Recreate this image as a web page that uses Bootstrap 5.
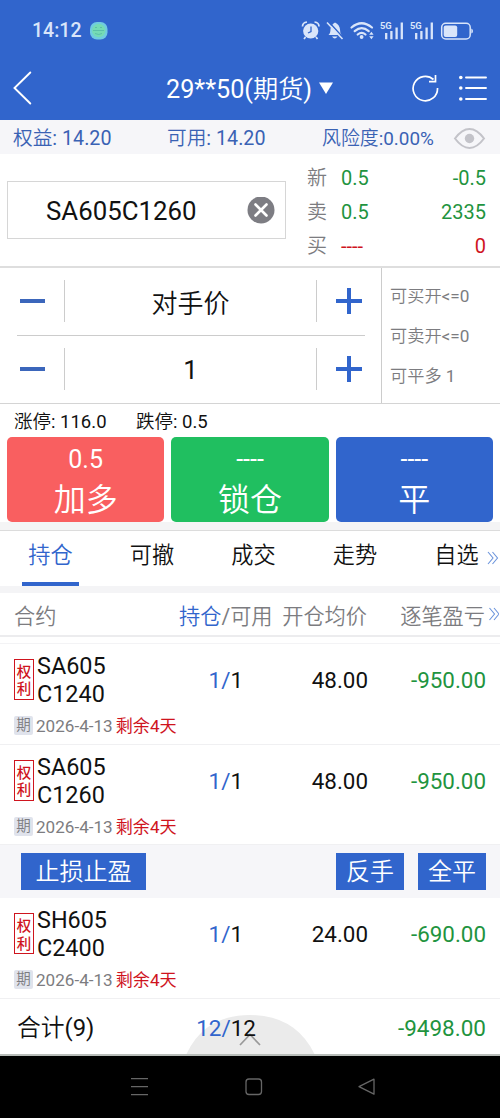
<!DOCTYPE html>
<html lang="zh-CN">
<head>
<meta charset="utf-8">
<meta name="viewport" content="width=device-width, initial-scale=1">
<title>期货交易</title>
<link href="https://cdn.jsdelivr.net/npm/bootstrap@5.3.0/dist/css/bootstrap.min.css" rel="stylesheet">
<style>
:root{--blue:#3165cc;--tint:#f6f6f9;--up:#cf141e;--down:#1f9440;--ink:#111;--dim:#7c7c80}
body{font-family:Roboto,"Noto Sans CJK SC DemiLight","Noto Sans CJK SC",sans-serif;color:var(--ink);background:#fff;font-size:20px;line-height:28px}
.phone{width:500px;height:1118px;overflow:hidden;white-space:nowrap}
svg{display:block;flex:none}
.c-blue{color:var(--blue)}.c-up{color:var(--up)}.c-down{color:var(--down)}.c-dim{color:var(--dim)}
.bg-brand{background:var(--blue)}
.status{height:60px;padding:1px 0 0 32px;color:#d9e5fa}
.clock{font-size:19.5px;font-weight:500;width:57px}
.titlebar{height:60px;padding:0 13px 2px 12px;color:#fff}
.account{font-size:25.2px}
.equity{height:34px;background:var(--tint);color:#3a62b4;padding:4px 14px 0 13px;font-size:19.7px}
.quote{height:114px;border-bottom:2px solid #dedede;padding-left:7px}
.code-box{width:279px;height:58px;border:1px solid #d6d6d6;padding:2px 10px 0 38px;font-size:25.8px}
.levels{padding:7px 14px 0 21px}
.levels>div{height:34px;line-height:34px}
.levels .lbl{width:34px}
.ticket{height:136px;border-bottom:1px solid #d4d4d4}
.steppers{width:382px;border-right:1px solid #ccc;padding:0 16px 0 17px}
.stepper{height:67px}
.stepper+.stepper{border-top:1px solid #ccc;height:68px}
.stepper .val{height:42px;line-height:45px;font-size:26px;border:solid #ccc;border-width:0 1px;width:253px;text-align:center}
.stepper .edge{width:47px}
.avail{font-size:17.2px;padding:8px 0 0 8px}
.avail>div{height:40.3px;line-height:41px}
.limits{height:33px;padding:4px 0 0 14px;font-size:18.5px}
.deals{height:93px;padding:0 7px 8px;background:linear-gradient(#fff 85px,#f4f4f5 85px)}
.deal{width:157.3px;height:85px;border-radius:5px;color:#fff;text-align:center;padding-top:5px}
.deal .px{font-size:25px;height:36px;line-height:36px}
.deal .act{font-size:32px;height:42px;line-height:44px}
.tabs{height:56px;border-top:1px solid #dcdcdc;padding-left:22px;font-size:22.2px}
.tabs>div{width:101.5px;flex:none}
.tabs span.t{display:block;width:57px;height:55px;text-align:center;line-height:48px;flex:none}
.tabs .on{color:var(--blue);border-bottom:4px solid var(--blue)}
.band{height:7px;background:#f4f4f6}
.cols{display:grid;grid-template-columns:142px 86px 126px 118px;padding:0 14px}
.cols>:not(:first-child){text-align:right}
.thead-row{height:44px;border-bottom:2px solid #ececee;line-height:47px;font-size:21.2px;color:var(--dim);grid-template-columns:165px 93px 95px 118px}
.spacer{height:7px;border-bottom:1px solid #f3f3f5}
.pos{height:101px;border-bottom:1px solid #f0f0f2;padding-top:8px;font-size:22.4px;align-content:start}
.pos .num{line-height:56px}
.pos .qty{margin-right:-1px}
.pos .name{font-size:23.4px;line-height:28px}
.right-tag{width:20px;height:41px;border:1.5px solid var(--up);color:var(--up);font-family:"Noto Sans CJK SC",sans-serif;font-size:14.5px;font-weight:500;line-height:17.5px;text-align:center;margin:7px 3px 0 0;padding-top:2px;white-space:normal}
.due{font-size:17.1px;line-height:20px;margin-top:8px}
.due>span{flex:none}
.due .left-days{font-family:Roboto,"Noto Sans CJK SC",sans-serif;margin-left:3px}
.due .q{width:19px;height:19px;background:#e0e3ec;border-radius:2px;font-size:14.5px;line-height:19px;text-align:center;margin-right:3px}
.actions{height:53px;background:var(--tint);padding:0 14px 0 21px}
.abtn{height:37px;line-height:39px;background:var(--blue);color:#fff;font-size:24px;text-align:center;width:68px}
.abtn.wide{width:125px}
.total{height:57px;border-bottom:2px solid #b8bdb9;font-size:22.5px;line-height:58px;position:relative;overflow:hidden}
.total .sum{font-size:23.8px;padding-left:3px;text-align:left}
.pull{position:absolute;left:180px;top:16px;z-index:0}
.total>div{position:relative;z-index:1}
.sysnav{height:62px;background:#000}
</style>
</head>
<body>
<div class="phone d-flex flex-column">
  <header class="bg-brand">
    <div class="status d-flex align-items-center">
      <span class="clock">14:12</span>
      <svg width="20" height="20" viewBox="0 0 20 20"><rect x="1" y="1" width="17.500" height="17.500" rx="7" fill="#70cbe0"/><circle cx="9.700" cy="9.500" r="6.800" fill="#75dbb5"/><path d="M4 9.500h11M6 6.500h2M11 6.500h2M6 12.500q4 2 7 0" stroke="#55b9a4" stroke-width=".8" fill="none"/></svg>
      <svg class="ms-auto" width="200" height="30" viewBox="300 15.500 200 30" fill="#d9e5fa" stroke="#d9e5fa" stroke-width="0">
        <circle cx="310.700" cy="30.500" r="7.600"/><path d="M302.500 26q0-4 4.500-4.500M319 26q0-4-4.500-4.500M305.500 36.500l-1.500 2M316 36.500l1.500 2" fill="none" stroke-width="1.700"/><path d="M311 26v5l-3 1.500" fill="none" stroke="#3165cc" stroke-width="1.300"/>
        <path d="M328.500 34.500q2-1.500 2-6 .5-4.500 4.500-6.500 4.500 2 5 7 0 4 1.500 5.500zM332 36h5.500q-2.700 4-5.500 0z"/><path d="M329.200 21.700l14 15.500" stroke="#3165cc" stroke-width="1.500"/><path d="M327 22l15.500 16.500" stroke-width="1.600"/>
        <path d="M351.500 27q10-8.500 20.500 0M354.700 30.700q7-6 14 0M357.700 34q4-3.300 7.800 0" fill="none" stroke-width="2.200" stroke-linecap="round"/><circle cx="361.600" cy="36.500" r="1.900"/><path d="M369.200 34.300l2.200-3 2.200 3zM369.200 35.700l2.200 3 2.200-3z"/>
        <g id="sig"><path d="M386.200 32.500v6.200M391.400 30.500v8.200M396.600 27v11.700M401.800 22v16.700" stroke-width="2.300"/><text x="380" y="28.300" font-size="9.300" font-weight="700" font-family="Roboto">5G</text></g>
        <use href="#sig" x="30"/>
        <rect x="441.700" y="22.800" width="28.500" height="15.700" rx="4" fill="none" stroke-width="1.500"/><rect x="443.700" y="24.900" width="13.500" height="11.500" rx="2"/><path d="M471.300 28q1.700.5 1.700 2.500t-1.700 2.500z"/>
      </svg>
    </div>
    <div class="titlebar d-flex align-items-center">
      <svg width="20" height="36" viewBox="0 0 20 36"><path d="M18.300 1.500L2.500 17l15.800 15.500" fill="none" stroke="#fff" stroke-width="1.900" stroke-linecap="round"/></svg>
      <span class="account" style="margin-left:134px;padding-top:2px">29**50(期货)</span>
      <svg width="16" height="14" viewBox="0 0 16 14" style="margin-left:6px;margin-bottom:2px"><path d="M1 1.500h14L8 13z" fill="#fff"/></svg>
      <svg class="ms-auto" width="28" height="30" viewBox="0 0 28 30" fill="none" stroke="#fff" stroke-width="1.700"><path d="M22.500 5.500A12.200 12.200 0 1 0 26.500 14M24.500 1v6.700H18"/></svg>
      <svg width="28" height="28" viewBox="0 0 28 28" style="margin-left:20px"><g stroke="#fff" stroke-width="1.900" stroke-linecap="round"><path d="M7 2.500h20M7 13h20M7 24h20"/></g><g fill="#fff"><circle cx="1.800" cy="2.500" r="1.800"/><circle cx="1.800" cy="13" r="1.800"/><circle cx="1.800" cy="24" r="1.800"/></g></svg>
    </div>
  </header>

  <div class="equity d-flex align-items-center">
    <span style="width:154px">权益: 14.20</span>
    <span style="width:155px">可用: 14.20</span>
    <span style="font-size:18.900px">风险度:0.00%</span>
    <svg class="ms-auto" width="33" height="24" viewBox="0 0 33 24"><path d="M2 11.500Q9 2 16.500 2T31 11.500Q24 21 16.500 21T2 11.500z" fill="none" stroke="#c3c3c9" stroke-width="2"/><circle cx="16.500" cy="11.500" r="4.700" fill="#c3c3c9"/></svg>
  </div>

  <section class="quote d-flex">
    <div class="code-box d-flex align-items-center justify-content-between" style="margin-top:27px">
      <span>SA605C1260</span>
      <svg width="28" height="28" viewBox="0 0 28 28"><circle cx="14" cy="13" r="13.500" fill="#7d7d83"/><path d="M8.500 7.500l11 11M19.500 7.500l-11 11" stroke="#fff" stroke-width="2.600" stroke-linecap="round"/></svg>
    </div>
    <div class="levels flex-grow-1">
      <div class="d-flex"><span class="lbl c-dim">新</span><span class="c-down">0.5</span><span class="c-down ms-auto">-0.5</span></div>
      <div class="d-flex"><span class="lbl c-dim">卖</span><span class="c-down">0.5</span><span class="c-down ms-auto">2335</span></div>
      <div class="d-flex"><span class="lbl c-dim">买</span><span class="c-up">----</span><span class="c-up ms-auto">0</span></div>
    </div>
  </section>

  <section class="ticket d-flex">
    <div class="steppers">
      <div class="stepper d-flex align-items-center">
        <div class="edge"><svg width="32" height="26"><path d="M3 13h25" stroke="#3b66bb" stroke-width="4"/></svg></div>
        <div class="val" style="line-height:48px">对手价</div>
        <svg width="46" height="26"><path d="M19 13h26M32 0v26" stroke="#3165cc" stroke-width="4"/></svg>
      </div>
      <div class="stepper d-flex align-items-center">
        <div class="edge"><svg width="32" height="26"><path d="M3 13h25" stroke="#3b66bb" stroke-width="4"/></svg></div>
        <div class="val">1</div>
        <svg width="46" height="26"><path d="M19 13h26M32 0v26" stroke="#3165cc" stroke-width="4"/></svg>
      </div>
    </div>
    <div class="avail c-dim"><div>可买开&lt;=0</div><div>可卖开&lt;=0</div><div>可平多 1</div></div>
  </section>

  <div class="limits d-flex"><span style="width:122px">涨停: 116.0</span><span>跌停: 0.5</span></div>

  <div class="deals d-flex justify-content-between">
    <div class="deal" style="background:#f95f60"><div class="px">0.5</div><div class="act">加多</div></div>
    <div class="deal" style="background:#20bf60"><div class="px">----</div><div class="act">锁仓</div></div>
    <div class="deal bg-brand"><div class="px">----</div><div class="act">平</div></div>
  </div>

  <nav class="tabs d-flex">
    <div><span class="t on">持仓</span></div><div><span class="t">可撤</span></div><div><span class="t">成交</span></div><div><span class="t">走势</span></div>
    <div class="d-flex"><span class="t">自选</span><svg width="12" height="14" viewBox="0 0 12 14" style="margin:20px 0 0 2px"><path d="M1 1l5 6-5 6M5.500 1l5 6-5 6" fill="none" stroke="#6b94dc" stroke-width="1.100"/></svg></div>
  </nav>
  <div class="band"></div>

  <div class="cols thead-row">
    <span>合约</span><span><span class="c-blue">持仓</span>/可用</span><span>开仓均价</span>
    <span class="d-flex justify-content-end">逐笔盈亏<svg width="12" height="14" viewBox="0 0 12 14" style="margin:14px -14px 0 2px"><path d="M2.500 1l5 6-5 6M7 1l5 6-5 6" fill="none" stroke="#6b94dc" stroke-width="1.100"/></svg></span>
  </div>
  <div class="spacer"></div>

  <div class="cols pos">
    <div><div class="d-flex"><div class="right-tag">权利</div><div class="name">SA605<br>C1240</div></div>
      <div class="due d-flex"><span class="q c-dim">期</span><span class="c-dim">2026-4-13</span><span class="c-up left-days">剩余4天</span></div></div>
    <span class="num qty"><span class="c-blue">1/</span>1</span><span class="num">48.00</span><span class="num c-down">-950.00</span>
  </div>
  <div class="cols pos">
    <div><div class="d-flex"><div class="right-tag">权利</div><div class="name">SA605<br>C1260</div></div>
      <div class="due d-flex"><span class="q c-dim">期</span><span class="c-dim">2026-4-13</span><span class="c-up left-days">剩余4天</span></div></div>
    <span class="num qty"><span class="c-blue">1/</span>1</span><span class="num">48.00</span><span class="num c-down">-950.00</span>
  </div>
  <div class="actions d-flex align-items-center">
    <div class="abtn wide">止损止盈</div><div class="abtn ms-auto">反手</div><div class="abtn" style="margin-left:14px">全平</div>
  </div>
  <div class="cols pos">
    <div><div class="d-flex"><div class="right-tag">权利</div><div class="name">SH605<br>C2400</div></div>
      <div class="due d-flex"><span class="q c-dim">期</span><span class="c-dim">2026-4-13</span><span class="c-up left-days">剩余4天</span></div></div>
    <span class="num qty"><span class="c-blue">1/</span>1</span><span class="num">24.00</span><span class="num c-down">-690.00</span>
  </div>
  <div class="total cols">
    <div class="sum">合计(9)</div><div style="margin-right:-14px"><span class="c-blue">12/</span>12</div><div></div><div class="c-down">-9498.00</div>
    <svg class="pull" width="140" height="40" viewBox="0 0 140 40"><path d="M6 40Q24 0 70 0t65 40z" fill="#ebebeb"/><path d="M60 30l10-10.500L80 30" fill="none" stroke="#999" stroke-width="1.700"/></svg>
  </div>

  <div class="sysnav">
    <svg width="500" height="62" viewBox="0 1056 500 62" fill="none" stroke="#666" stroke-width="1.300"><path d="M131 1078.700h17M131 1086.700h17M131 1094.700h17"/><rect x="246" y="1079" width="15.500" height="15.500" rx="3"/><path d="M359 1086.700l15-7.500v15z" stroke-linejoin="round"/></svg>
  </div>
</div>
<script src="https://cdn.jsdelivr.net/npm/bootstrap@5.3.0/dist/js/bootstrap.bundle.min.js"></script>
</body>
</html>
